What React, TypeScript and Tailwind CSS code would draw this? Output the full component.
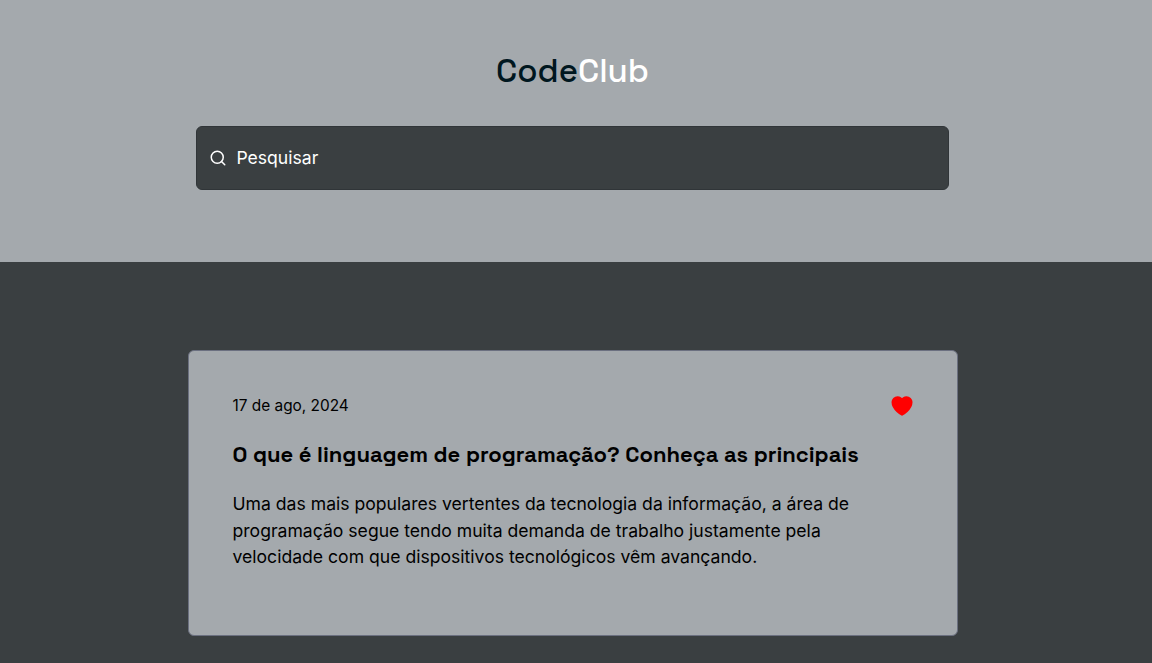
import { FiSearch } from "react-icons/fi";

const display = "font-['Space_Grotesk','Inter',sans-serif]";

function HeartIcon() {
  return (
    <svg width="25" height="25" viewBox="-0.5 0.5 24 24" fill="#ff0000" stroke="#ff0000" strokeWidth="2.2" strokeLinejoin="round" className="-mr-[0.5px]">
      <path d="M21 8.25c0-2.485-2.099-4.5-4.688-4.5-1.935 0-3.597 1.126-4.312 2.733-.715-1.607-2.377-2.733-4.313-2.733C5.1 3.75 3 5.765 3 8.25c0 7.22 9 12 9 12s9-4.78 9-12Z" />
    </svg>
  );
}

function Header() {
  return (
    <header className="flex h-[262px] flex-col items-center bg-[#a4a9ad] pr-[7px] pt-[50px]">
      <h1 className={`${display} h-[42px] whitespace-nowrap text-[33px] font-medium leading-[42px] text-[#00171f]`}>
        Code<span className="text-white">Club</span>
      </h1>
      <label className="mt-[34px] flex h-16 w-[753px] items-center gap-[9px] rounded-md border border-[#303538] bg-[#3a3f41] pl-3 text-white">
        <FiSearch size={18} className="shrink-0" />
        <input
          type="text"
          placeholder="Pesquisar"
          className="w-full bg-transparent pl-[0.4px] text-[17.6px] outline-none placeholder:text-white"
        />
      </label>
    </header>
  );
}

function Post() {
  return (
    <article className="h-[286px] w-[770px] rounded-md border border-[#6b7080] bg-[#a4a9ad] px-[43.5px] pt-[43px] text-black">
      <div className="flex h-6 items-center justify-between">
        <time className="text-[15.4px]">17 de ago, 2024</time>
        <HeartIcon />
      </div>
      <h2 className={`${display} mt-5 h-8 whitespace-nowrap text-[22px] font-semibold leading-8`}>
        O que é linguagem de programação? Conheça as principais
      </h2>
      <p className="mt-[21.3px] w-[640px] text-[17.6px] leading-[26.4px]">
        Uma das mais populares vertentes da tecnologia da informação, a área de programação segue tendo muita demanda de trabalho justamente pela velocidade com que dispositivos tecnológicos vêm avançando.
      </p>
    </article>
  );
}

export default function App() {
  return (
    <div className="flex h-[663px] flex-col overflow-hidden bg-[#3a3f41] font-['Inter',sans-serif]">
      <Header />
      <main className="flex flex-1 justify-center pr-[6px] pt-[88px]">
        <Post />
      </main>
    </div>
  );
}
